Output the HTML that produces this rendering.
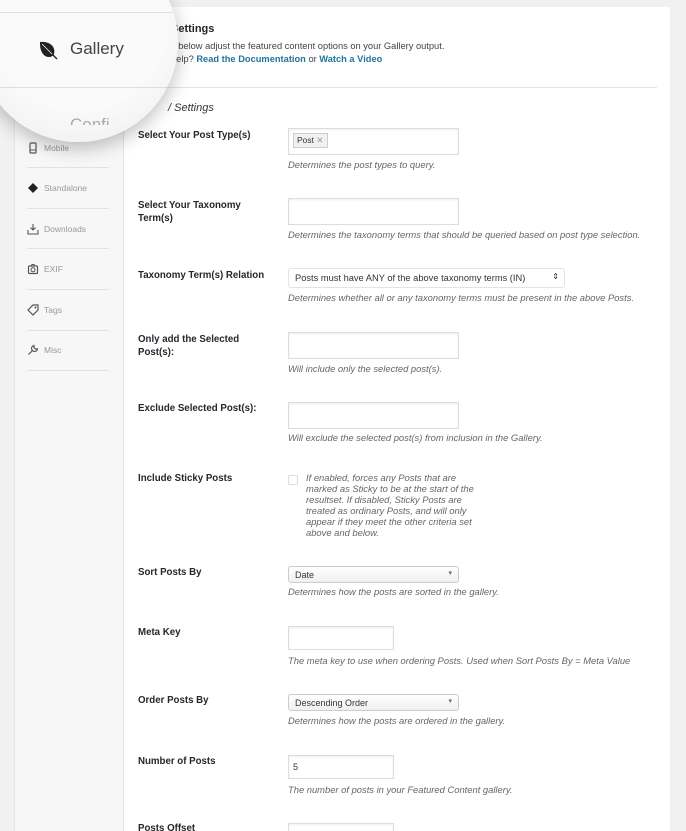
<!DOCTYPE html>
<html><head><meta charset="utf-8"><style>
*{margin:0;padding:0;box-sizing:border-box}
html,body{width:686px;height:831px;overflow:hidden}
body{background:#f1f1f1;font-family:"Liberation Sans",sans-serif;position:relative;color:#23282d}
.a{position:absolute;white-space:nowrap}
.lbl{position:absolute;left:138px;font-size:9.7px;font-weight:bold;color:#23282d;line-height:13px}
.d{position:absolute;left:288px;font-size:9.4px;font-style:italic;color:#666;white-space:nowrap}
.in{position:absolute;left:288px;background:#fff;border:1px solid #ddd;box-shadow:inset 0 1px 2px rgba(0,0,0,.07)}
.sel{position:absolute;left:288px;height:17px;border:1px solid #ccc;border-radius:3px;background:linear-gradient(#fff,#f0f0f0);font-size:9px;padding:3px 6px;color:#333}
.sel:after{content:"▾";position:absolute;right:6px;top:2px;font-size:7px;color:#666}
.si{position:absolute;left:44px;font-size:8.5px;color:#999}
.ic{position:absolute;left:27px;width:12px;height:12px}
.sep{position:absolute;left:27px;width:82px;height:1px;background:#e2e2e2}
</style></head><body>
<div class="a" style="left:14px;top:7px;width:110px;height:824px;background:#f7f7f7;border-left:1px solid #e5e5e5;border-right:1px solid #e5e5e5"></div>
<div class="a" style="left:124px;top:7px;width:546px;height:824px;background:#fff"></div>

<div class="a" style="left:171px;top:23px;font-size:11px;font-weight:bold">Settings</div>
<div class="a" style="left:171px;top:41px;font-size:9.3px;color:#444">s below adjust the featured content options on your Gallery output.</div>
<div class="a" style="left:171px;top:54px;font-size:9.3px;color:#444">help? <b style="color:#21759b">Read the Documentation</b> or <b style="color:#21759b">Watch a Video</b></div>
<div class="a" style="left:124px;top:87px;width:533px;height:1px;background:#e5e5e5"></div>
<div class="a" style="left:168px;top:102px;font-size:11px;font-style:italic;color:#333">/ Settings</div>

<svg class="ic" style="top:142px" viewBox="0 0 12 12"><rect x="3" y="1" width="6" height="10" rx="1" fill="none" stroke="#555" stroke-width="1.2"/><line x1="3" y1="8" x2="9" y2="8" stroke="#555"/></svg><div class="si" style="top:143px">Mobile</div>
<div class="sep" style="top:167px"></div>
<svg class="ic" style="top:182px" viewBox="0 0 12 12"><path d="M6 1 L11 6 L6 11 L1 6Z" fill="#222"/></svg><div class="si" style="top:183px">Standalone</div>
<div class="sep" style="top:208px"></div>
<svg class="ic" style="top:223px" viewBox="0 0 12 12"><path d="M1 7 V11 H11 V7 M6 1 V7 M3.5 4.5 L6 7 L8.5 4.5" fill="none" stroke="#555" stroke-width="1.1"/></svg><div class="si" style="top:224px">Downloads</div>
<div class="sep" style="top:248px"></div>
<svg class="ic" style="top:263px" viewBox="0 0 12 12"><rect x="1.5" y="3" width="9" height="7.5" rx="1" fill="none" stroke="#555" stroke-width="1.2"/><circle cx="6" cy="6.8" r="2" fill="none" stroke="#555"/><path d="M4 3 L5 1.5 H7 L8 3" fill="none" stroke="#555"/></svg><div class="si" style="top:264px">EXIF</div>
<div class="sep" style="top:289px"></div>
<svg class="ic" style="top:304px" viewBox="0 0 12 12"><path d="M1 6 L6 1 H11 V6 L6 11Z" fill="none" stroke="#555" stroke-width="1.2"/><circle cx="8.5" cy="3.5" r="1" fill="#555"/></svg><div class="si" style="top:305px">Tags</div>
<div class="sep" style="top:330px"></div>
<svg class="ic" style="top:344px" viewBox="0 0 12 12"><path d="M1.5 10.5 L6 6 M7 1.5 A3 3 0 1 0 10.5 5 L8.5 5 L7 3.5Z" fill="none" stroke="#555" stroke-width="1.2"/></svg><div class="si" style="top:345px">Misc</div>
<div class="sep" style="top:370px"></div>

<div class="lbl" style="top:129px">Select Your Post Type(s)</div>
<div class="in" style="top:128px;width:171px;height:27px"><span style="position:absolute;left:4px;top:4px;font-size:8.5px;background:#f1f1f1;border:1px solid #ccc;padding:1px 3px;color:#333">Post <span style="color:#999">✕</span></span></div>
<div class="d" style="top:159px">Determines the post types to query.</div>

<div class="lbl" style="top:199px">Select Your Taxonomy<br>Term(s)</div>
<div class="in" style="top:198px;width:171px;height:27px"></div>
<div class="d" style="top:229px">Determines the taxonomy terms that should be queried based on post type selection.</div>

<div class="lbl" style="top:269px">Taxonomy Term(s) Relation</div>
<div class="a" style="left:288px;top:268px;width:277px;height:20px;border:1px solid #e3e3e3;border-radius:3px;font-size:9.3px;padding:4px 6px;color:#333">Posts must have ANY of the above taxonomy terms (IN)<span style="position:absolute;right:5px;top:3px;font-size:8px">⇕</span></div>
<div class="d" style="top:292px">Determines whether all or any taxonomy terms must be present in the above Posts.</div>

<div class="lbl" style="top:333px">Only add the Selected<br>Post(s):</div>
<div class="in" style="top:332px;width:171px;height:27px"></div>
<div class="d" style="top:363px">Will include only the selected post(s).</div>

<div class="lbl" style="top:402px">Exclude Selected Post(s):</div>
<div class="in" style="top:402px;width:171px;height:27px"></div>
<div class="d" style="top:432px">Will exclude the selected post(s) from inclusion in the Gallery.</div>

<div class="lbl" style="top:472px">Include Sticky Posts</div>
<div class="a" style="left:288px;top:475px;width:10px;height:10px;border:1px solid #ddd;border-radius:2px"></div>
<div class="d" style="left:306px;top:472px;line-height:11px">If enabled, forces any Posts that are<br>marked as Sticky to be at the start of the<br>resultset. If disabled, Sticky Posts are<br>treated as ordinary Posts, and will only<br>appear if they meet the other criteria set<br>above and below.</div>

<div class="lbl" style="top:566px">Sort Posts By</div>
<div class="sel" style="top:566px;width:171px">Date</div>
<div class="d" style="top:586px">Determines how the posts are sorted in the gallery.</div>

<div class="lbl" style="top:626px">Meta Key</div>
<div class="in" style="top:626px;width:106px;height:24px"></div>
<div class="d" style="top:655px">The meta key to use when ordering Posts. Used when Sort Posts By = Meta Value</div>

<div class="lbl" style="top:694px">Order Posts By</div>
<div class="sel" style="top:694px;width:171px">Descending Order</div>
<div class="d" style="top:715px">Determines how the posts are ordered in the gallery.</div>

<div class="lbl" style="top:755px">Number of Posts</div>
<div class="in" style="top:755px;width:106px;height:24px;font-size:9px;padding:6px 4px;color:#333">5</div>
<div class="d" style="top:784px">The number of posts in your Featured Content gallery.</div>

<div class="lbl" style="top:822px">Posts Offset</div>
<div class="in" style="top:823px;width:106px;height:24px"></div>

<div class="a" style="left:-22px;top:-58px;width:200px;height:200px;border-radius:50%;background:radial-gradient(circle at 50% 40%,#fafafa 55%,#ececec 100%);box-shadow:0 6px 18px rgba(0,0,0,.25);overflow:hidden">
  <div class="a" style="left:0;top:70px;width:206px;height:1px;background:#ddd"></div>
  <div class="a" style="left:0;top:145px;width:206px;height:1px;background:#ddd"></div>
  <svg class="a" style="left:59px;top:97px" width="22" height="22" viewBox="0 0 22 22"><path d="M3 3 C12 2 19 7 17 15 C15 19 9 19 6 15 C3 11 3 7 3 3Z" fill="#222"/><path d="M5 5 L20 20" stroke="#222" stroke-width="1.3"/><path d="M5 5 L15 15" stroke="#fafafa" stroke-width="0.8"/></svg>
  <div class="a" style="left:92px;top:97px;font-size:17px;color:#444">Gallery</div>
  <div class="a" style="left:92px;top:173px;width:60px;height:10px;overflow:hidden"><div style="font-size:17px;color:#aaa">Confi</div></div>
</div>
</body></html>
